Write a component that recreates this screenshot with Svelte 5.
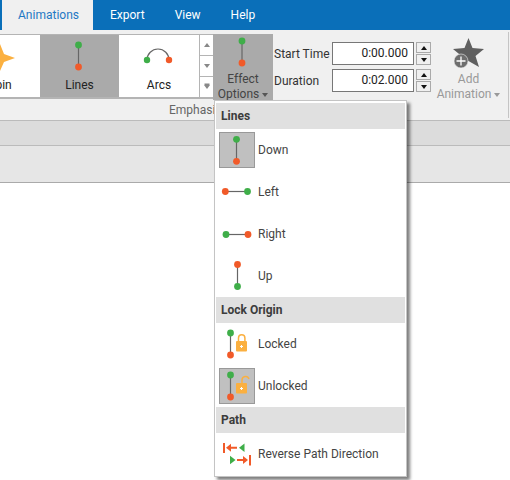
<script>
  const tabs = ['Animations', 'Export', 'View', 'Help'];

  const GREEN = '#3fae49';
  const ORANGE = '#f15a29';

  const times = [
    { label: 'Start Time', value: '0:00.000' },
    { label: 'Duration', value: '0:02.000' },
  ];

  const sections = [
    {
      title: 'Lines',
      items: [
        { label: 'Down', icon: 'down', selected: true },
        { label: 'Left', icon: 'left' },
        { label: 'Right', icon: 'right' },
        { label: 'Up', icon: 'up' },
      ],
    },
    {
      title: 'Lock Origin',
      items: [
        { label: 'Locked', icon: 'locked' },
        { label: 'Unlocked', icon: 'unlocked', selected: true },
      ],
    },
    {
      title: 'Path',
      items: [{ label: 'Reverse Path Direction', icon: 'reverse' }],
    },
  ];
</script>

{#snippet line(x1, y1, x2, y2, c1, c2)}
  <line {x1} {y1} {x2} {y2} stroke="#666" stroke-width="1.2" />
  <circle cx={x1} cy={y1} r="3.4" fill={c1} />
  <circle cx={x2} cy={y2} r="3.4" fill={c2} />
{/snippet}

{#snippet padlock(open)}
  <path
    d={open
      ? 'M23 15v-3a3.6 3.6 0 0 1 7 -1'
      : 'M19.5 12v-3a3.2 3.2 0 0 1 6.4 0v3'}
    fill="none"
    stroke="#fbb040"
    stroke-width="1.5"
  />
  {#if open}
    <rect x="17" y="15" width="11" height="10.5" rx="1" fill="#fbb040" />
    <path d="M22.5 19v3M21 20.5h3" stroke="#fff" stroke-width="1" />
  {:else}
    <rect x="17" y="12" width="11" height="10.5" rx="1" fill="#fbb040" />
    <path d="M22.5 16v3M21 17.5h3" stroke="#fff" stroke-width="1" />
  {/if}
{/snippet}

{#snippet menuIcon(name)}
  <svg width="36" height="36" viewBox="0 0 36 36">
    {#if name === 'down'}
      {@render line(17.5, 7.3, 17.5, 29.3, GREEN, ORANGE)}
    {:else if name === 'left'}
      {@render line(6.3, 17.5, 28.5, 17.5, ORANGE, GREEN)}
    {:else if name === 'right'}
      {@render line(7, 18.5, 29, 18.5, GREEN, ORANGE)}
    {:else if name === 'up'}
      {@render line(18.5, 6.5, 18.5, 28.5, ORANGE, GREEN)}
    {:else if name === 'locked'}
      {@render line(11.5, 7, 11.5, 29, GREEN, ORANGE)}
      <g transform="translate(0 3)">{@render padlock(false)}</g>
    {:else if name === 'unlocked'}
      {@render line(11.5, 7, 11.5, 29, GREEN, ORANGE)}
      {@render padlock(true)}
    {:else if name === 'reverse'}
      <path d="M5 7v10M31 19v10.500" stroke={ORANGE} stroke-width="2" />
      <path d="M9 11.700h9M18 24h9" stroke={ORANGE} stroke-width="2" />
      <polygon points="7,11.700 12,7.700 12,15.700" fill={ORANGE} />
      <polygon points="20,11.700 25.500,7.500 25.500,16" fill={GREEN} />
      <polygon points="16.500,24 11,19.800 11,28.200" fill={GREEN} />
      <polygon points="29,24 24,20 24,28" fill={ORANGE} />
    {/if}
  </svg>
{/snippet}

<div class="page">
  <nav class="tabs">
    {#each tabs as tab, i}
      <span class="tab" class:active={i === 0}>{tab}</span>
    {/each}
  </nav>

  <section class="ribbon">
    <div class="controls">
      <div class="gallery">
        <div class="tile clipped">
          <svg width="80" height="42" viewBox="0 0 80 42">
            <polygon
              points="40,9 44,19 55,23 44,27 40,36 36,27 25,23 36,19"
              fill="#fbb040"
            />
          </svg>
          <span>Spin</span>
        </div>
        <div class="tile on">
          <svg width="79" height="42" viewBox="0 0 79 42">
            {@render line(38.5, 10, 38.5, 32, GREEN, ORANGE)}
          </svg>
          <span>Lines</span>
        </div>
        <div class="tile wide">
          <svg width="80" height="42" viewBox="0 0 80 42">
            <path d="M28 25a11 11 0 0 1 22 0" fill="none" stroke="#666" stroke-width="1.2" />
            <circle cx="28" cy="25" r="3.2" fill={GREEN} />
            <circle cx="50" cy="25" r="3.2" fill={ORANGE} />
          </svg>
          <span>Arcs</span>
        </div>
        <div class="scroller">
          <button aria-label="Previous row"><i class="arrow up grey"></i></button>
          <button aria-label="Next row"><i class="arrow grey"></i></button>
          <button aria-label="More"><i class="arrow grey more"></i></button>
        </div>
      </div>

      <div class="big-button effect">
        <svg width="60" height="36" viewBox="0 0 60 36">
          {@render line(29, 7, 29, 29, GREEN, ORANGE)}
        </svg>
        <span>Effect</span>
        <span>Options <i class="arrow dark"></i></span>
      </div>

      <div class="times">
        {#each times as t}
          <div class="time-row">
            <span class="time-label">{t.label}</span>
            <div class="time-input">{t.value}</div>
            <div class="spin">
              <button aria-label="Increase"><i class="arrow up black"></i></button>
              <button aria-label="Decrease"><i class="arrow black"></i></button>
            </div>
          </div>
        {/each}
      </div>

      <div class="big-button add">
        <svg width="36" height="36" viewBox="0 0 36 36">
          <polygon
            points="17.500,4 21.500,14 33,15 24.500,22 28,33 17.500,27 7,33 10.500,22 2,15 13.500,14"
            fill="#5f5f5f"
          />
          <circle cx="10" cy="27" r="7" fill="#6e6e6e" stroke="#f0f0f0" stroke-width="0.6" />
          <path d="M10 22.500v9M5.500 27h9" stroke="#fff" stroke-width="1.3" />
        </svg>
        <span>Add</span>
        <span>Animation <i class="arrow pale"></i></span>
      </div>
    </div>
    <div class="group-label">Emphasis</div>
  </section>

  <div class="band first"></div>
  <div class="band second"></div>

  <div class="menu">
    {#each sections as section}
      <div class="menu-title">{section.title}</div>
      {#each section.items as item}
        <div class="menu-item">
          <span class="icon-box" class:selected={item.selected}>
            {@render menuIcon(item.icon)}
          </span>
          <span>{item.label}</span>
        </div>
      {/each}
    {/each}
  </div>
</div>

<style>
  :global(body) {
    margin: 0;
    background: #fff;
  }

  .page {
    position: relative;
    width: 510px;
    height: 480px;
    overflow: hidden;
    font-family: Roboto, "Open Sans", sans-serif;
    font-size: 12px;
    color: #444;
  }

  button {
    display: flex;
    align-items: center;
    justify-content: center;
    padding: 0;
    margin: 0;
    box-sizing: border-box;
  }

  .arrow {
    display: inline-block;
    width: 0;
    height: 0;
    border-left: 3.500px solid transparent;
    border-right: 3.500px solid transparent;
    border-top: 4px solid currentColor;
    vertical-align: middle;
  }
  .arrow.up {
    border-top: 0;
    border-bottom: 4px solid currentColor;
  }
  .arrow.grey {
    color: #888;
  }
  .arrow.more {
    box-shadow: 0 -2px 0 -0.500px #888;
  }
  .arrow.black {
    color: #111;
  }
  .arrow.dark {
    color: #555;
  }
  .arrow.pale {
    color: #999;
  }

  .tabs {
    display: flex;
    height: 30px;
    padding-left: 2px;
    background: #0a6fb9;
    color: #fff;
    line-height: 30px;
  }
  .tab {
    padding: 0 15px;
  }
  .tab.active {
    box-sizing: border-box;
    width: 91px;
    padding: 0 0 0 2px;
    margin-right: 2px;
    text-align: center;
    background: #f0f0f0;
    color: #1f78c4;
  }

  .ribbon {
    position: relative;
    height: 90px;
    box-sizing: border-box;
    padding-top: 4px;
    background: #f0f0f0;
  }
  .ribbon::after {
    content: '';
    position: absolute;
    top: 2px;
    bottom: 2px;
    right: 1px;
    width: 1px;
    background: #c4c4c4;
  }
  .controls {
    display: flex;
    height: 66px;
  }

  .gallery {
    display: flex;
    height: 65px;
    box-sizing: border-box;
    border-top: 1px solid #b4b4b4;
    border-bottom: 2px solid #b4b4b4;
    background: #fff;
  }
  .tile {
    display: flex;
    flex-direction: column;
    align-items: center;
    width: 79px;
    height: 62px;
    color: #222;
  }
  .tile svg {
    flex: none;
  }
  .tile span {
    line-height: 16px;
  }
  .tile.clipped {
    width: 80px;
    margin-left: -40px;
  }
  .tile.on {
    background: #aaa;
  }
  .tile.wide {
    width: 80px;
  }

  .scroller {
    display: flex;
    flex-direction: column;
    width: 14px;
    border-left: 1px solid #b4b4b4;
    box-sizing: border-box;
  }
  .scroller button {
    flex: 1;
    border: 0;
    border-bottom: 1px solid #b4b4b4;
    background: #fff;
  }
  .scroller button:last-child {
    border-bottom: 0;
  }

  .big-button {
    display: flex;
    flex-direction: column;
    align-items: center;
    flex: none;
    line-height: 15px;
  }
  .big-button svg {
    flex: none;
  }
  .effect {
    width: 60px;
    height: 66px;
    background: #aaa;
  }
  .effect svg {
    margin-bottom: 2px;
  }
  .add {
    margin-left: 1px;
    width: 73px;
    color: #999;
  }
  .add svg {
    margin-bottom: 2px;
  }

  .times {
    display: flex;
    flex-direction: column;
    gap: 4px;
    padding: 8px 0 0 1px;
    color: #333;
  }
  .time-row {
    display: flex;
    align-items: center;
    height: 23px;
  }
  .time-label {
    width: 58px;
  }
  .time-input {
    box-sizing: border-box;
    width: 82px;
    height: 23px;
    padding-right: 5px;
    border: 1px solid #777;
    background: #fff;
    color: #222;
    line-height: 21px;
    text-align: right;
  }
  .spin {
    display: flex;
    flex-direction: column;
    gap: 1px;
    margin-left: 2px;
  }
  .spin button {
    width: 15px;
    height: 11px;
    border: 1px solid #aaa;
    background: #f0f0f0;
  }

  .group-label {
    padding: 1px 0 0 169px;
    line-height: 19px;
    color: #666;
  }

  .band {
    box-sizing: border-box;
    border-top: 1px solid #bbb;
  }
  .band.first {
    height: 25px;
    background: #dcdcdc;
  }
  .band.second {
    height: 38px;
    background: #e6e6e6;
    border-bottom: 1px solid #aaa;
  }

  .menu {
    position: absolute;
    left: 214px;
    top: 100px;
    box-sizing: border-box;
    width: 193px;
    padding: 2px 1px 1px;
    background: #fff;
    border: 1px solid #c4c4c4;
    box-shadow: 3px 3px 3px rgba(0, 0, 0, 0.5);
  }
  .menu-title {
    height: 26px;
    padding-left: 5px;
    background: #e0e0e0;
    font-weight: 700;
    line-height: 26px;
    color: #3c3c3c;
  }
  .menu-item {
    display: flex;
    align-items: center;
    gap: 3px;
    height: 42px;
    padding-left: 3px;
    color: #444;
  }
  .icon-box {
    display: flex;
    box-sizing: border-box;
    width: 36px;
    height: 36px;
    flex: none;
  }
  .icon-box.selected {
    background: #c0c0c0;
    outline: 1px solid #999;
    outline-offset: -1px;
  }
</style>
